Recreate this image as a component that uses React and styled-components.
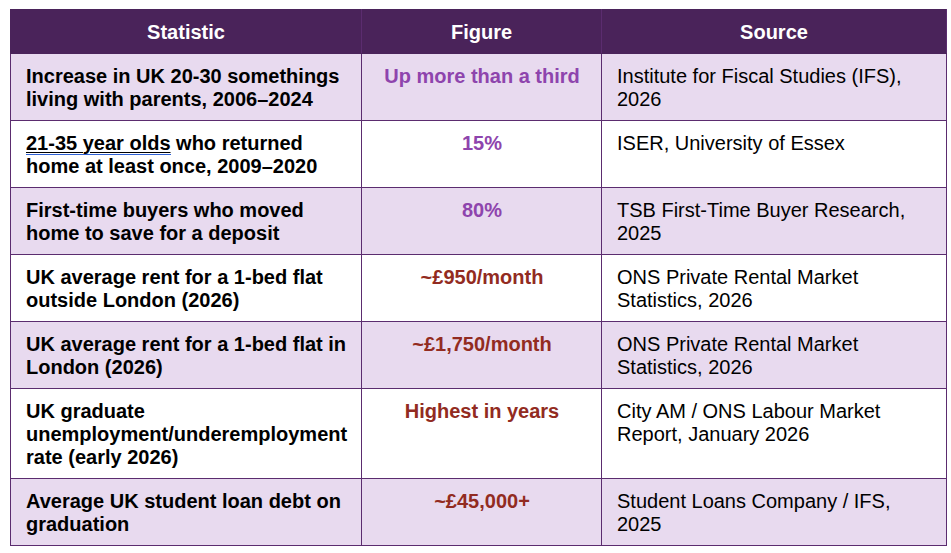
import React from 'react';
import styled, { createGlobalStyle } from 'styled-components';

const GlobalStyle = createGlobalStyle`
  body {
    margin: 0;
    background: #ffffff;
    font-family: "Liberation Sans", Arial, sans-serif;
  }
`;

const Page = styled.div`
  padding: 9px 5px 0 10px;
`;

const Table = styled.table`
  width: 937px;
  border-collapse: collapse;
  table-layout: fixed;
  font-size: 20px;
  line-height: 23px;
  color: #000;
`;

const HeadCell = styled.th`
  height: 44px;
  padding: 1px 15px 0;
  background: #4a235a;
  color: #ffffff;
  font-weight: bold;
  text-align: center;
  vertical-align: middle;
  border: 1px solid #4a235a;
  border-right-color: #5b2c6f;
  box-sizing: border-box;
`;

const Row = styled.tr`
  background: ${(p) => (p.$shaded ? '#e8daef' : '#ffffff')};
`;

const Cell = styled.td`
  padding: 11px 14px 9px 15px;
  vertical-align: top;
  border: 1.5px solid #5b2c6f;
`;

const StatCell = styled(Cell)`
  font-weight: bold;
`;

const FigureCell = styled(Cell)`
  font-weight: bold;
  text-align: center;
  color: ${(p) => (p.$tone === 'purple' ? '#8e44ad' : '#922b21')};
`;

const SourceCell = styled(Cell)`
  font-weight: normal;
`;

const Flagged = styled.span`
  text-decoration: underline;
  text-decoration-thickness: 1px;
  text-underline-offset: 2px;
  border-bottom: 1.5px solid #2f62d6;
`;

const rows = [
  {
    stat: 'Increase in UK 20-30 somethings living with parents, 2006–2024',
    figure: 'Up more than a third',
    tone: 'purple',
    source: 'Institute for Fiscal Studies (IFS), 2026',
  },
  {
    stat: (
      <>
        <Flagged>21-35 year olds</Flagged> who returned home at least once, 2009–2020
      </>
    ),
    figure: '15%',
    tone: 'purple',
    source: 'ISER, University of Essex',
  },
  {
    stat: 'First-time buyers who moved home to save for a deposit',
    figure: '80%',
    tone: 'purple',
    source: 'TSB First-Time Buyer Research, 2025',
  },
  {
    stat: 'UK average rent for a 1-bed flat outside London (2026)',
    figure: '~£950/month',
    tone: 'red',
    source: 'ONS Private Rental Market Statistics, 2026',
  },
  {
    stat: 'UK average rent for a 1-bed flat in London (2026)',
    figure: '~£1,750/month',
    tone: 'red',
    source: 'ONS Private Rental Market Statistics, 2026',
  },
  {
    stat: 'UK graduate unemployment/underemployment rate (early 2026)',
    figure: 'Highest in years',
    tone: 'red',
    source: 'City AM / ONS Labour Market Report, January 2026',
  },
  {
    stat: 'Average UK student loan debt on graduation',
    figure: '~£45,000+',
    tone: 'red',
    source: 'Student Loans Company / IFS, 2025',
  },
];

function App() {
  return (
    <>
      <GlobalStyle />
      <Page>
        <Table>
          <colgroup>
            <col style={{ width: 351 }} />
            <col style={{ width: 240 }} />
            <col style={{ width: 345 }} />
          </colgroup>
          <thead>
            <tr>
              <HeadCell>Statistic</HeadCell>
              <HeadCell>Figure</HeadCell>
              <HeadCell>Source</HeadCell>
            </tr>
          </thead>
          <tbody>
            {rows.map((r, i) => (
              <Row key={r.figure} $shaded={i % 2 === 0}>
                <StatCell>{r.stat}</StatCell>
                <FigureCell $tone={r.tone}>{r.figure}</FigureCell>
                <SourceCell>{r.source}</SourceCell>
              </Row>
            ))}
          </tbody>
        </Table>
      </Page>
    </>
  );
}

export default App;
